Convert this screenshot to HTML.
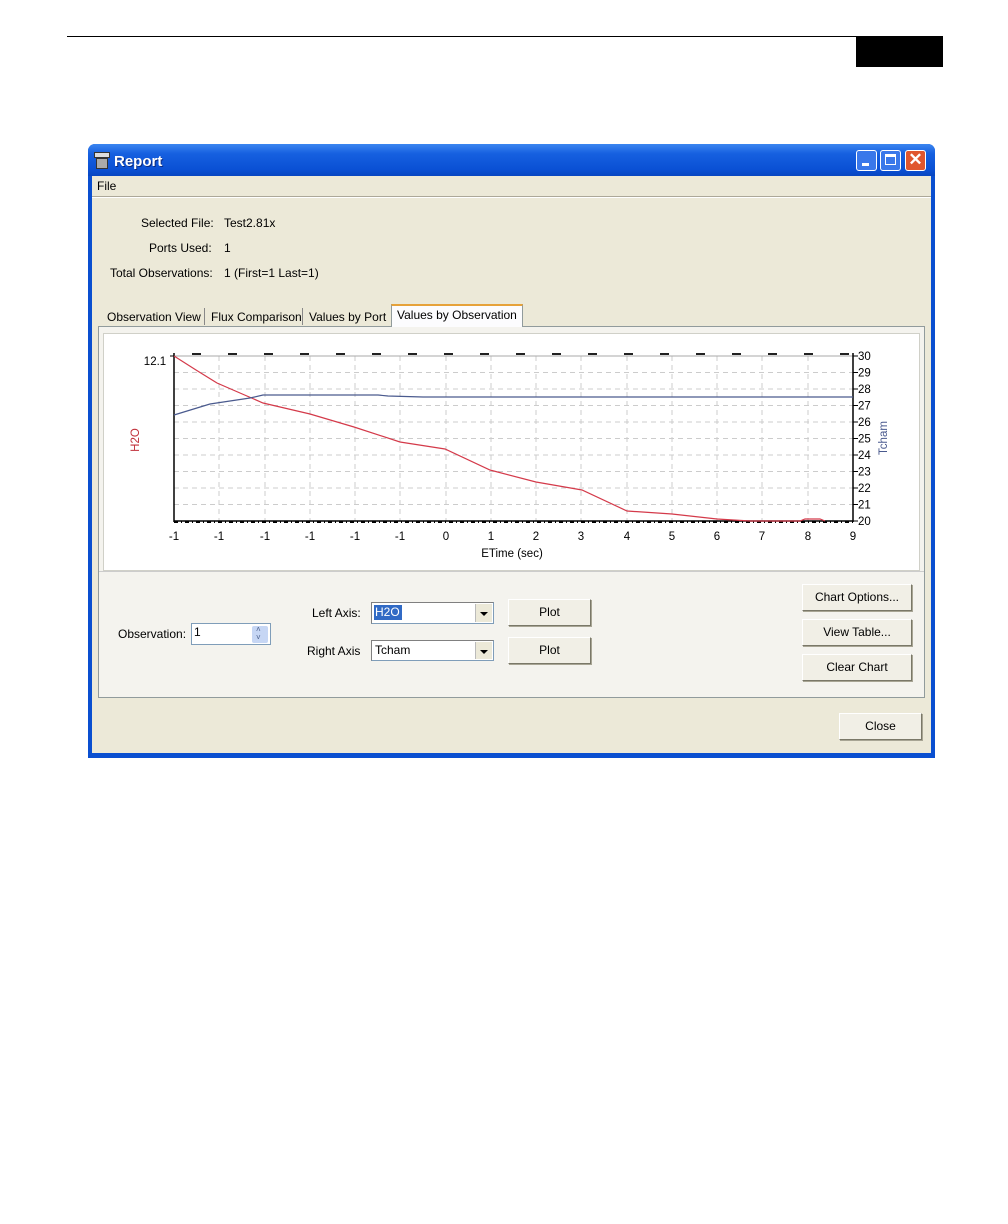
<!DOCTYPE html>
<html><head><meta charset="utf-8"><style>
body{margin:0;width:1008px;height:1224px;background:#fff;position:relative;font-family:"Liberation Sans",Arial,sans-serif;overflow:hidden}
.a{position:absolute}
.t{position:absolute;font-size:12px;color:#000;white-space:nowrap}
.btn{position:absolute;background:#f1efe6;border:1px solid #fff;border-right-color:#7a7868;border-bottom-color:#7a7868;box-shadow:1px 1px 0 #a8a594;font-size:12px;text-align:center;box-sizing:border-box}
.btn span{display:inline-block}
.combo{position:absolute;background:#fff;border:1px solid #7f9db9;box-sizing:border-box;border-top-color:#808080;border-left-color:#808080}
.dd{position:absolute;right:1px;top:1px;bottom:1px;width:16px;background:#ece9d8;border-left:1px solid #bbb}
.dd:after{content:"";position:absolute;left:4px;top:8px;border:4px solid transparent;border-top:4px solid #000}
</style></head><body>
<div class="a" style="left:67px;top:36px;width:876px;height:1px;background:#000"></div>
<div class="a" style="left:856px;top:36px;width:87px;height:31px;background:#000"></div>

<div class="a" style="left:88px;top:144px;width:847px;height:614px;background:#0a4fd0;border-radius:7px 7px 0 0"></div>
<div class="a" style="left:88px;top:144px;width:847px;height:32px;border-radius:7px 7px 0 0;background:linear-gradient(#3b86f0,#1660e0 30%,#0a50d4 80%,#0846c0)"></div>
<div class="a" style="left:92px;top:176px;width:839px;height:577px;background:#ece9d8"></div>
<div class="a" style="left:94px;top:152px;width:14px;height:4px;background:#ddd;border:1px solid #333"></div>
<div class="a" style="left:96px;top:158px;width:10px;height:9px;background:#aaa;border:1px solid #333"></div>
<div class="a" style="left:114px;top:153px;font-size:15px;font-weight:bold;color:#fff;text-shadow:1px 1px #0a2a80">Report</div>
<div class="a" style="left:856px;top:150px;width:21px;height:21px;border:1px solid #fff;border-radius:3px;box-sizing:border-box;background:#3a78ea"><div class="a" style="left:5px;top:12px;width:7px;height:3px;background:#fff"></div></div>
<div class="a" style="left:880px;top:150px;width:21px;height:21px;border:1px solid #fff;border-radius:3px;box-sizing:border-box;background:#3a78ea"><div class="a" style="left:4px;top:3px;width:11px;height:11px;border:1px solid #fff;border-top-width:3px;box-sizing:border-box"></div></div>
<div class="a" style="left:905px;top:150px;width:21px;height:21px;border:1px solid #fff;border-radius:3px;box-sizing:border-box;background:#e0562e;color:#fff;font-size:17px;line-height:18px;text-align:center;font-weight:bold">✕</div>

<div class="t" style="left:97px;top:179px">File</div>
<div class="a" style="left:92px;top:196px;width:839px;height:1px;background:#aca899"></div>
<div class="a" style="left:92px;top:197px;width:839px;height:1px;background:#fff"></div>

<div class="t" style="left:141px;top:216px">Selected File:</div>
<div class="t" style="left:224px;top:216px">Test2.81x</div>
<div class="t" style="left:149px;top:241px">Ports Used:</div>
<div class="t" style="left:224px;top:241px">1</div>
<div class="t" style="left:110px;top:266px">Total Observations:</div>
<div class="t" style="left:224px;top:266px">1 (First=1 Last=1)</div>

<div class="a" style="left:98px;top:326px;width:827px;height:372px;border:1px solid #919b9c;box-sizing:border-box;background:#f4f3ee"></div>
<div class="t" style="left:107px;top:310px">Observation View</div>
<div class="a" style="left:204px;top:308px;width:1px;height:17px;background:#888"></div>
<div class="t" style="left:211px;top:310px">Flux Comparison</div>
<div class="a" style="left:302px;top:308px;width:1px;height:17px;background:#888"></div>
<div class="t" style="left:309px;top:310px">Values by Port</div>
<div class="a" style="left:391px;top:304px;width:132px;height:23px;background:#fcfcfe;border:1px solid #919b9c;border-bottom:none;box-sizing:border-box;border-top:2px solid #e6a23a"></div>
<div class="t" style="left:397px;top:308px">Values by Observation</div>

<div class="a" style="left:103px;top:333px;width:817px;height:238px;background:#fff;border:1px solid #d0d0c8;box-sizing:border-box"></div>
<svg class="a" style="left:0;top:0" width="1008" height="760">
<g stroke="#ccc" stroke-dasharray="5,4" stroke-width="1">
<line x1="219" y1="356" x2="219" y2="521"/><line x1="265" y1="356" x2="265" y2="521"/><line x1="310" y1="356" x2="310" y2="521"/><line x1="355" y1="356" x2="355" y2="521"/><line x1="400" y1="356" x2="400" y2="521"/><line x1="446" y1="356" x2="446" y2="521"/><line x1="491" y1="356" x2="491" y2="521"/><line x1="536" y1="356" x2="536" y2="521"/><line x1="581" y1="356" x2="581" y2="521"/><line x1="627" y1="356" x2="627" y2="521"/><line x1="672" y1="356" x2="672" y2="521"/><line x1="717" y1="356" x2="717" y2="521"/><line x1="762" y1="356" x2="762" y2="521"/><line x1="808" y1="356" x2="808" y2="521"/>
<line x1="174" y1="372.5" x2="853" y2="372.5"/><line x1="174" y1="389" x2="853" y2="389"/><line x1="174" y1="405.5" x2="853" y2="405.5"/><line x1="174" y1="422" x2="853" y2="422"/><line x1="174" y1="438.5" x2="853" y2="438.5"/><line x1="174" y1="455" x2="853" y2="455"/><line x1="174" y1="471.5" x2="853" y2="471.5"/><line x1="174" y1="488" x2="853" y2="488"/><line x1="174" y1="504.5" x2="853" y2="504.5"/>
</g>
<line x1="174" y1="356" x2="853" y2="356" stroke="#aaa"/>
<line x1="192" y1="354" x2="853" y2="354" stroke="#222" stroke-width="2" stroke-dasharray="9,27"/>
<line x1="174" y1="353" x2="174" y2="522" stroke="#000" stroke-width="1.5"/>
<line x1="853" y1="353" x2="853" y2="522" stroke="#000" stroke-width="1.5"/>
<line x1="174" y1="521" x2="853" y2="521" stroke="#000" stroke-width="1.5"/>
<line x1="174" y1="522" x2="853" y2="522" stroke="#000" stroke-width="2" stroke-dasharray="4,3,1,3" />
<g stroke="#000"><line x1="170" y1="356" x2="174" y2="356"/>
<line x1="853" y1="356" x2="858" y2="356"/><line x1="853" y1="372.5" x2="858" y2="372.5"/><line x1="853" y1="389" x2="858" y2="389"/><line x1="853" y1="405.5" x2="858" y2="405.5"/><line x1="853" y1="422" x2="858" y2="422"/><line x1="853" y1="438.5" x2="858" y2="438.5"/><line x1="853" y1="455" x2="858" y2="455"/><line x1="853" y1="471.5" x2="858" y2="471.5"/><line x1="853" y1="488" x2="858" y2="488"/><line x1="853" y1="504.5" x2="858" y2="504.5"/><line x1="853" y1="521" x2="858" y2="521"/></g>
<polyline fill="none" stroke="#d43a4a" stroke-width="1.2" points="174,356 196,370 217,383 240,393 263,403 310,414 354,427 400,442 445,449 490,470 536,482 582,490 627,511 672,514 717,519 750,521 800,521 805,519 820,519 825,521"/>
<polyline fill="none" stroke="#4a5a8e" stroke-width="1.2" points="174,415 210,404 250,398 263,395 378,395 388,396 423,397 853,397"/>
<g font-size="11.5" font-family="Liberation Sans,Arial,sans-serif" fill="#000" text-anchor="middle">
<text x="174" y="540">-1</text><text x="219" y="540">-1</text><text x="265" y="540">-1</text><text x="310" y="540">-1</text><text x="355" y="540">-1</text><text x="400" y="540">-1</text><text x="446" y="540">0</text><text x="491" y="540">1</text><text x="536" y="540">2</text><text x="581" y="540">3</text><text x="627" y="540">4</text><text x="672" y="540">5</text><text x="717" y="540">6</text><text x="762" y="540">7</text><text x="808" y="540">8</text><text x="853" y="540">9</text>
<text x="512" y="557">ETime (sec)</text>
<text x="155" y="365">12.1</text>
</g>
<g font-size="11.5" font-family="Liberation Sans,Arial,sans-serif" fill="#000">
<text x="858" y="360">30</text><text x="858" y="376.5">29</text><text x="858" y="393">28</text><text x="858" y="409.5">27</text><text x="858" y="426">26</text><text x="858" y="442.5">25</text><text x="858" y="459">24</text><text x="858" y="475.5">23</text><text x="858" y="492">22</text><text x="858" y="508.5">21</text><text x="858" y="525">20</text>
</g>
<text transform="translate(139,440) rotate(-90)" font-size="11.5" font-family="Liberation Sans,Arial,sans-serif" fill="#c0303a" text-anchor="middle">H2O</text>
<text transform="translate(887,438) rotate(-90)" font-size="11.5" font-family="Liberation Sans,Arial,sans-serif" fill="#4a5a8e" text-anchor="middle">Tcham</text>
</svg>
<div class="a" style="left:99px;top:571px;width:825px;height:1px;background:#ccc"></div>

<div class="t" style="left:118px;top:627px">Observation:</div>
<div class="combo" style="left:191px;top:623px;width:80px;height:22px;border-color:#7f9db9"></div>
<div class="t" style="left:194px;top:625px">1</div>
<div class="a" style="left:252px;top:626px;width:16px;height:17px;background:#c6d6f4;border-radius:2px"></div>
<div class="a" style="left:256px;top:626px;font-size:8px;color:#4a5f8a;line-height:8px">˄<br>˅</div>
<div class="t" style="left:312px;top:606px">Left Axis:</div>
<div class="t" style="left:307px;top:644px">Right Axis</div>
<div class="combo" style="left:371px;top:602px;width:123px;height:22px"><div class="dd"></div></div>
<div class="a" style="left:374px;top:605px;width:28px;height:15px;background:#316ac5"></div>
<div class="t" style="left:375px;top:605px;color:#fff">H2O</div>
<div class="combo" style="left:371px;top:640px;width:123px;height:21px"><div class="dd"></div></div>
<div class="t" style="left:375px;top:643px">Tcham</div>
<div class="btn" style="left:508px;top:599px;width:83px;height:27px;line-height:25px"><span>Plot</span></div>
<div class="btn" style="left:508px;top:637px;width:83px;height:27px;line-height:25px"><span>Plot</span></div>
<div class="btn" style="left:802px;top:584px;width:110px;height:27px;line-height:25px"><span>Chart Options...</span></div>
<div class="btn" style="left:802px;top:619px;width:110px;height:27px;line-height:25px"><span>View Table...</span></div>
<div class="btn" style="left:802px;top:654px;width:110px;height:27px;line-height:25px"><span>Clear Chart</span></div>
<div class="btn" style="left:839px;top:713px;width:83px;height:27px;line-height:25px"><span>Close</span></div>
</body></html>
